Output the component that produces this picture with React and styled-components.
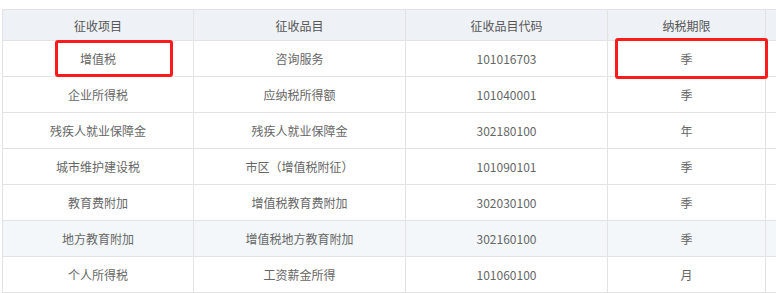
import React from 'react'
import styled, { createGlobalStyle } from 'styled-components'

const GlobalStyle = createGlobalStyle`
  body {
    margin: 0;
    background: #fff;
    font-family: "Noto Sans CJK SC", "Noto Sans", sans-serif;
  }
`

const Page = styled.div`
  position: relative;
  width: 776px;
  height: 293px;
  overflow: hidden;
  padding: 9px 0 0 2px;
  box-sizing: border-box;
`

const Table = styled.table`
  border-collapse: collapse;
  table-layout: fixed;
  width: 883px;
  font-size: 12px;
  color: #666;
`

const Th = styled.th`
  height: 30px;
  padding: 0;
  font-weight: normal;
  color: #555;
  background: #eef1f5;
  border: 1px solid #e3e3e3;
  text-align: center;
`

const Tr = styled.tr`
  background: ${p => (p.$striped ? '#f3f7fa' : '#fff')};
`

const Td = styled.td`
  height: 35px;
  padding: 0;
  border: 1px solid #e3e3e3;
  text-align: center;
`

const Mark = styled.div`
  position: absolute;
  left: ${p => p.$x}px;
  top: ${p => p.$y}px;
  width: ${p => p.$w}px;
  height: ${p => p.$h}px;
  border: 3px solid #fb1b1b;
  border-radius: 3px;
  box-sizing: border-box;
`

const rows = [
  ['增值税', '咨询服务', '101016703', '季'],
  ['企业所得税', '应纳税所得额', '101040001', '季'],
  ['残疾人就业保障金', '残疾人就业保障金', '302180100', '年'],
  ['城市维护建设税', '市区（增值税附征）', '101090101', '季'],
  ['教育费附加', '增值税教育费附加', '302030100', '季'],
  ['地方教育附加', '增值税地方教育附加', '302160100', '季'],
  ['个人所得税', '工资薪金所得', '101060100', '月'],
]

export default function App() {
  return (
    <Page>
      <GlobalStyle />
      <Table>
        <colgroup>
          <col style={{ width: 191 }} />
          <col style={{ width: 212 }} />
          <col style={{ width: 202 }} />
          <col style={{ width: 158 }} />
          <col style={{ width: 120 }} />
        </colgroup>
        <thead>
          <tr>
            <Th>征收项目</Th>
            <Th>征收品目</Th>
            <Th>征收品目代码</Th>
            <Th>纳税期限</Th>
            <Th></Th>
          </tr>
        </thead>
        <tbody>
          {rows.map((r, i) => (
            <Tr key={i} $striped={i === 5}>
              {r.map((c, j) => (
                <Td key={j}>{c}</Td>
              ))}
              <Td></Td>
            </Tr>
          ))}
        </tbody>
      </Table>
      <Mark $x={55} $y={40} $w={118} $h={37} />
      <Mark $x={615} $y={38} $w={153} $h={41} />
    </Page>
  )
}
